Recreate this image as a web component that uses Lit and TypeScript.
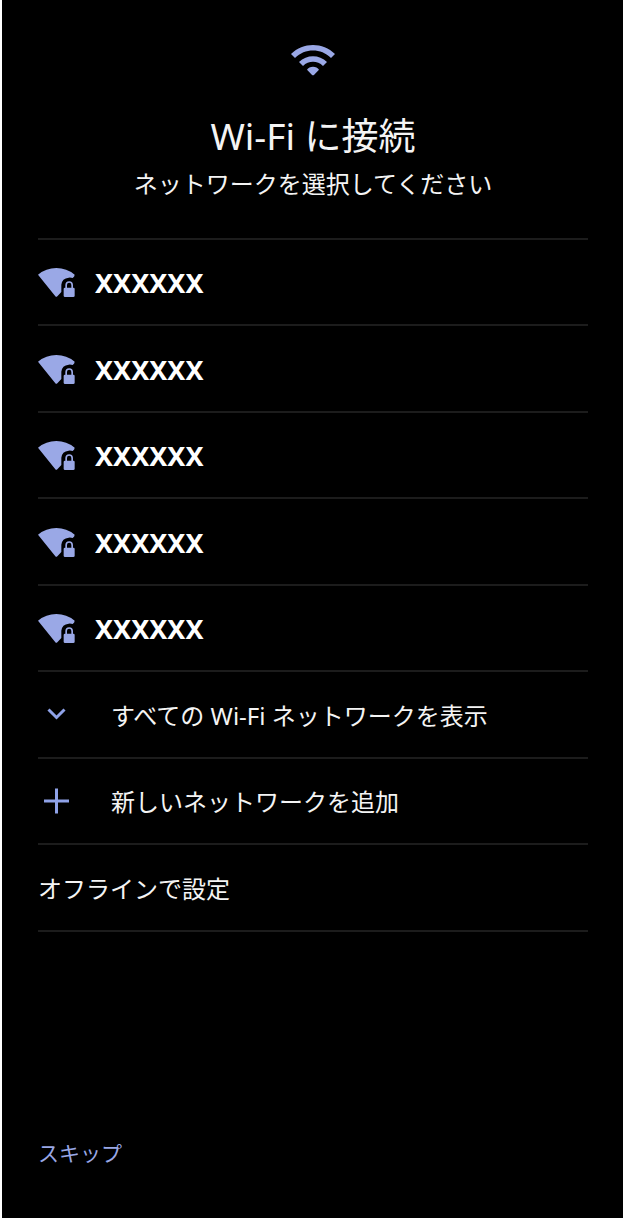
import { LitElement, html, css, svg } from "lit";
import { customElement, property } from "lit/decorators.js";

const wifiIcon = html`
  <svg class="hero-icon" viewBox="0 0 24 24" aria-hidden="true">
    <path
      d="M1 9l2 2c4.97-4.97 13.03-4.97 18 0l2-2C16.93 2.93 7.08 2.93 1 9zM9 16.9l2.4 2.5q.6.5 1.2 0L15 16.9c-1.1-2-4.900-2-6 0zM5 13l2 2c2.760-2.760 7.240-2.760 10 0l2-2C15.140 9.140 8.870 9.140 5 13z"
    />
  </svg>
`;

const lockedSignal = html`
  <svg class="icon" viewBox="24 23 111 90" aria-hidden="true">
    <path
      d="M24 46Q48 26 79 26Q110 26 134 46Q134 51 128 56Q121 54 116 55Q96 57 94 76V98L82 111Q79 114 76 111Z"
    />
    <rect x="101" y="85" width="33" height="28" rx="4" />
    <path class="shackle" d="M108.500 87V77a9 9 0 0 1 18 0V87" />
  </svg>
`;

const chevron = svg`<path class="line" d="M10.500 9.500L18.500 17.500L26.500 9.500" />`;
const plus = svg`<path class="line" d="M18.500 2.500V27.500M6 15H31" />`;

@customElement("network-row")
class NetworkRow extends LitElement {
  @property() name = "";

  static styles = css`
    :host {
      display: flex;
      flex: 1;
    }
    .row {
      display: flex;
      flex: 1;
      align-items: center;
      gap: 20px;
      padding: 0;
      border: 0;
      background: none;
      color: #fff;
      font: 700 27px/40px "Noto Sans", "Noto Sans CJK JP", sans-serif;
      text-align: left;
      cursor: pointer;
    }
    .label {
      padding-top: 2px;
    }
    .icon {
      flex: none;
      width: 37px;
      height: 30px;
      fill: #9aa8e6;
    }
    .shackle {
      fill: none;
      stroke: #9aa8e6;
      stroke-width: 5;
    }
  `;

  render() {
    return html`<button class="row" type="button">${lockedSignal}<span class="label">${this.name}</span></button>`;
  }
}

@customElement("app-root")
class AppRoot extends LitElement {
  networks = ["XXXXXX", "XXXXXX", "XXXXXX", "XXXXXX", "XXXXXX"];

  static styles = css`
    :host {
      display: block;
      background: #000;
      color: #f4f4f4;
      font-family: "Noto Sans", "Noto Sans CJK JP", sans-serif;
    }
    .screen {
      box-sizing: border-box;
      display: flex;
      flex-direction: column;
      min-height: 100vh;
      padding: 36px 35px 45px 36px;
      border-left: 2px solid #fff;
    }
    .header {
      display: flex;
      flex-direction: column;
      align-items: center;
      text-align: center;
      padding-bottom: 35px;
    }
    .hero-icon {
      width: 48px;
      height: 48px;
      fill: #9aa8e6;
    }
    .title {
      margin: 24px 0 0;
      font-size: 37px;
      font-weight: 400;
      line-height: 56px;
    }
    .subtitle {
      margin: 0;
      font-size: 24px;
      line-height: 39px;
    }
    .list {
      margin: 0;
      padding: 0;
      list-style: none;
      border-top: 2px solid #1c1c1c;
    }
    .item {
      box-sizing: border-box;
      display: flex;
      min-height: 86px;
      border-bottom: 2px solid #1c1c1c;
    }
    .item:nth-child(even) {
      min-height: 87px;
    }
    .action {
      display: flex;
      flex: 1;
      align-items: center;
      gap: 36px;
      padding: 0;
      border: 0;
      background: none;
      color: inherit;
      font: inherit;
      font-size: 24px;
      line-height: 36px;
      text-align: left;
      cursor: pointer;
    }
    .label {
      padding-top: 2px;
    }
    .icon {
      flex: none;
      width: 37px;
      height: 30px;
    }
    .line {
      fill: none;
      stroke: #8fa2e8;
      stroke-width: 3;
    }
    .footer {
      margin-top: auto;
    }
    .skip {
      padding: 0;
      border: 0;
      background: none;
      color: #9aa8e6;
      font: inherit;
      font-size: 21px;
      line-height: 40px;
      cursor: pointer;
    }
  `;

  render() {
    return html`
      <main class="screen">
        <header class="header">
          ${wifiIcon}
          <h1 class="title">Wi-Fi に接続</h1>
          <p class="subtitle">ネットワークを選択してください</p>
        </header>
        <ul class="list">
          ${this.networks.map(
            (name) => html`<li class="item"><network-row .name=${name}></network-row></li>`
          )}
          <li class="item">
            <button class="action" type="button">
              <svg class="icon" viewBox="0 0 37 30" aria-hidden="true">${chevron}</svg>
              <span class="label">すべての Wi-Fi ネットワークを表示</span>
            </button>
          </li>
          <li class="item">
            <button class="action" type="button">
              <svg class="icon" viewBox="0 0 37 30" aria-hidden="true">${plus}</svg>
              <span class="label">新しいネットワークを追加</span>
            </button>
          </li>
          <li class="item">
            <button class="action" type="button"><span class="label">オフラインで設定</span></button>
          </li>
        </ul>
        <footer class="footer">
          <button class="skip" type="button">スキップ</button>
        </footer>
      </main>
    `;
  }
}
